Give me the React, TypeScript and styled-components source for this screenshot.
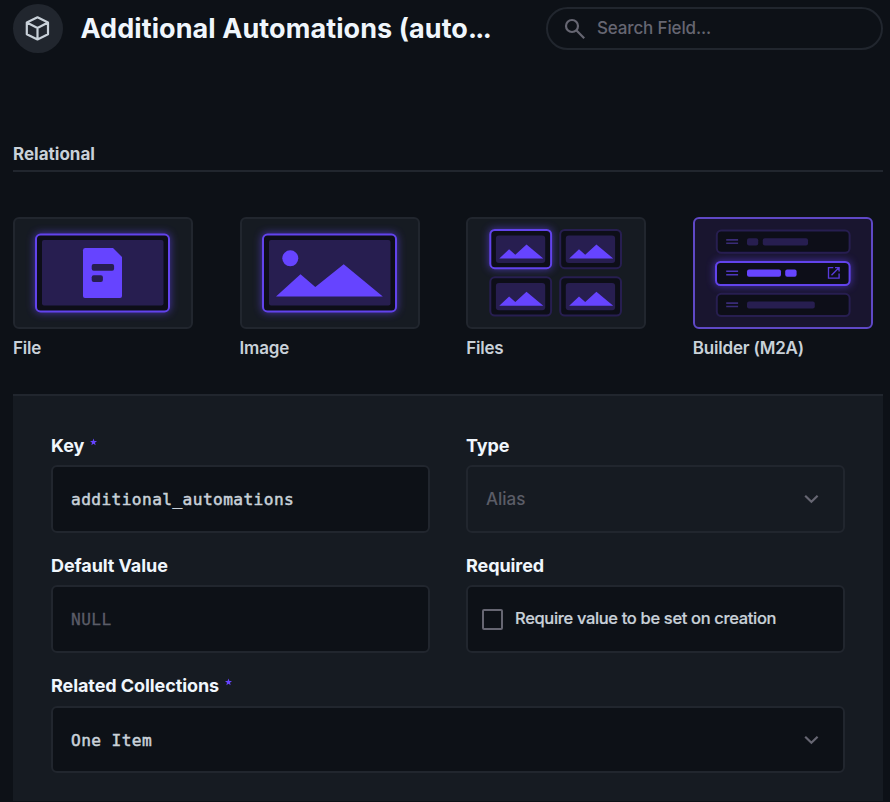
import React from "react";
import styled, { createGlobalStyle, css } from "styled-components";

const GlobalStyle = createGlobalStyle`
  * { box-sizing: border-box; }
  body {
    margin: 0;
    background: #0d1117;
    color: #c9d1d9;
    font-family: Inter, sans-serif;
    overflow: hidden;
  }
`;

const Page = styled.main`
  width: 890px;
  height: 802px;
  padding: 4px 7px 0 13px;
  display: flex;
  flex-direction: column;
  overflow: hidden;
`;

const Header = styled.header`
  height: 49px;
  display: flex;
  align-items: center;
`;

const Avatar = styled.div`
  width: 50px;
  height: 49px;
  flex: none;
  padding-right: 1px;
  border-radius: 50%;
  background: #21262e;
  display: grid;
  place-items: center;
`;

const Title = styled.h1`
  margin: 0 0 0 17.5px;
  width: 465.5px;
  font-size: 27px;
  line-height: 36px;
  font-weight: 700;
  letter-spacing: 0.08px;
  color: #f0f6fc;
  white-space: nowrap;
`;

const Dots = styled.span`
  letter-spacing: -1.7px;
`;

const Search = styled.label`
  width: 337px;
  height: 43px;
  flex: none;
  padding: 0 0 0 16px;
  border: 2px solid #21262e;
  border-radius: 22px;
  display: flex;
  align-items: center;
  gap: 11px;
`;

const SearchInput = styled.input`
  flex: 1;
  min-width: 0;
  padding: 0 0 1px;
  border: 0;
  outline: 0;
  background: transparent;
  color: #c9d1d9;
  font: 500 17px/24px Inter, sans-serif;
  letter-spacing: -0.15px;
  &::placeholder { color: #666672; opacity: 1; }
`;

const SectionTitle = styled.h2`
  margin: 88px 0 0;
  height: 31px;
  padding-top: 1px;
  border-bottom: 2px solid #21262e;
  font-size: 17px;
  line-height: 24px;
  font-weight: 700;
  letter-spacing: 0;
`;

const Cards = styled.div`
  margin-top: 45px;
  display: grid;
  grid-template-columns: repeat(4, 180px);
  column-gap: 46.6px;
`;

const Card = styled.div`
  display: flex;
  flex-direction: column;
`;

const Preview = styled.div<{ $active?: boolean }>`
  height: 112px;
  border: 2px solid ${(p) => (p.$active ? "#5f48c6" : "#21262e")};
  border-radius: 6px;
  background: ${(p) => (p.$active ? "#19152f" : "#161b22")};
  svg { display: block; }
`;

const CardName = styled.div`
  margin-top: 7px;
  font-size: 17px;
  line-height: 24px;
  font-weight: 600;
  letter-spacing: -0.2px;
  white-space: nowrap;
`;

const Panel = styled.section`
  margin-top: 34px;
  height: 407px;
  padding: 38px 38px 0;
  border-top: 2px solid #21262e;
  background: #161b22;
  display: grid;
  grid-template-columns: 379px 379px;
  grid-auto-rows: 120px;
  column-gap: 36px;
`;

const Field = styled.div<{ $wide?: boolean }>`
  display: flex;
  flex-direction: column;
  ${(p) => p.$wide && css`grid-column: 1 / -1;`}
`;

const Label = styled.div<{ $height?: number }>`
  height: ${(p) => p.$height ?? 31}px;
  font-size: 18px;
  line-height: 23px;
  font-weight: 700;
  letter-spacing: -0.08px;
  color: #f0f6fc;
  display: flex;
  gap: 5.5px;
  svg { margin-top: 4px; }
`;

const Control = styled.div<{ $disabled?: boolean; $height?: number; $check?: boolean }>`
  height: ${(p) => p.$height ?? 68}px;
  padding: 0 ${(p) => (p.$check ? "14px" : "24px 0 18px")};
  border: 2px solid #21262e;
  border-radius: 6px;
  background: ${(p) => (p.$disabled ? "#161b22" : "#0d1117")};
  display: flex;
  align-items: center;
  justify-content: ${(p) => (p.$check ? "flex-start" : "space-between")};
`;

const Value = styled.span<{ $muted?: boolean }>`
  font-size: 17px;
  line-height: 24px;
  font-weight: 500;
  color: ${(p) => (p.$muted ? "#5b5d67" : "#c9d1d9")};
`;

const MonoValue = styled(Value)`
  padding-top: 2px;
  font-family: "DejaVu Sans Mono", monospace;
  font-size: 16.2px;
  letter-spacing: 0.4px;
  -webkit-text-stroke: ${(p) => (p.$muted ? "0.3px" : "0.5px")} currentColor;
`;

const CheckBox = styled.span`
  width: 21px;
  height: 21px;
  margin-right: 12px;
  border: 2px solid #666672;
  border-radius: 2px;
`;

const CheckText = styled.span`
  padding-bottom: 2px;
  font-size: 16.5px;
  line-height: 24px;
  font-weight: 500;
  letter-spacing: -0.34px;
  -webkit-text-stroke: 0.2px currentColor;
`;

const ACCENT = "#6644ff";
const DIM = "#271e50";
const GROUND = "#0d0e18";

const Star = () => (
  <svg width="7" height="8" viewBox="0 0 10 10">
    <path fill={ACCENT} d="M5 0 6.3 3.4 10 3.6 7.1 5.9 8.1 9.6 5 7.5 1.9 9.6 2.9 5.9 0 3.6 3.7 3.4z" />
  </svg>
);

const Chevron = () => (
  <svg width="16" height="16" viewBox="0 0 16 16" fill="none" stroke="#666672" strokeWidth="2.2">
    <path d="M2.2 4.8 8.4 10.8 14.6 4.8" />
  </svg>
);

const BoxIcon = () => (
  <svg width="25" height="25" viewBox="0.5 0.5 25 25" fill="none" stroke="#c9d1d9" strokeWidth="2.2" strokeLinejoin="round">
    <path d="M13 1.8 23.5 7.1V18.7L13 24 2.3 18.7V7.1zM2.3 7.1 13 12.4 23.5 7.1M13 12.4V24" />
  </svg>
);

const SearchIcon = () => (
  <svg width="22" height="22" viewBox="0 0 22 22" fill="none" stroke="#666672" strokeWidth="2.2">
    <circle cx="8" cy="8" r="6" />
    <path d="M12.3 12.3 20.2 20.2" />
  </svg>
);

type FrameProps = { x: number; y: number; w: number; h: number; r?: number; glow?: boolean };

const Frame = ({ x, y, w, h, r = 4.5, glow }: FrameProps) => (
  <>
    {glow && <rect x={x} y={y} width={w} height={h} rx={r} fill={ACCENT} opacity="0.6" filter="url(#glow)" />}
    <rect
      x={x + 1} y={y + 1} width={w - 2} height={h - 2} rx={r}
      fill={GROUND} stroke={glow ? "#6243ec" : DIM} strokeWidth="2"
    />
  </>
);

const Art = ({ children }: { children: React.ReactNode }) => (
  <svg width="176" height="108" viewBox="0 0 176 108">
    <defs>
      <filter id="glow" x="-30%" y="-50%" width="160%" height="200%">
        <feGaussianBlur stdDeviation="4" />
      </filter>
    </defs>
    {children}
  </svg>
);

const FileArt = () => (
  <Art>
    <Frame x={20} y={14.6} w={135} h={78.8} glow />
    <rect x="27" y="21" width="121.5" height="65.5" rx="2" fill={DIM} />
    <path fill={ACCENT} d="M70.3 29H98L107 38V77a2 2 0 0 1-2 2H70a2 2 0 0 1-2-2V31.3a2.3 2.3 0 0 1 2.3-2.3z" />
    <rect x="76.7" y="45" width="22.4" height="6.7" rx="2" fill={DIM} />
    <rect x="76.7" y="56.2" width="11.2" height="6.7" rx="2" fill={DIM} />
  </Art>
);

const ImageArt = () => (
  <Art>
    <Frame x={20} y={14.6} w={135} h={78.8} glow />
    <rect x="27" y="21" width="121.5" height="65.5" rx="2" fill={DIM} />
    <circle cx="48.3" cy="39.3" r="8" fill={ACCENT} />
    <path fill={ACCENT} d="M34 77.5 58.5 55.2 73.3 68 101.7 45.2 140.8 77.5z" />
  </Art>
);

const TILES = [
  { x: 21.3, y: 10, glow: true },
  { x: 91.2, y: 10, glow: false },
  { x: 21.3, y: 57.3, glow: false },
  { x: 91.2, y: 57.3, glow: false },
];

const FilesArt = () => (
  <Art>
    {TILES.map((t) => (
      <g key={`${t.x}-${t.y}`}>
        <Frame x={t.x} y={t.y} w={62.8} h={40.2} glow={t.glow} />
        <rect x={t.x + 6.6} y={t.y + 6.6} width="49.3" height="27.3" rx="3" fill={DIM} />
        <path transform={`translate(${t.x} ${t.y})`} fill={ACCENT} d="M10 29.5 19.8 20.3 26 25.8 37.2 15.4 54 29.5z" />
      </g>
    ))}
  </Art>
);

const ROWS = [
  { y: 10.6, glow: false, bars: [[52, 11.2], [67.8, 45.2]] },
  { y: 42, glow: true, bars: [[52, 34], [90.2, 11.4]] },
  { y: 73.8, glow: false, bars: [[52, 67.8]] },
];

const BuilderArt = () => (
  <Art>
    {ROWS.map((row) => (
      <g key={row.y}>
        <Frame x={row.glow ? 20 : 20.8} y={row.y} w={row.glow ? 135.6 : 134.8} h={row.glow ? 25 : 24.2} glow={row.glow} />
        <path
          d={`M31.2 ${row.y + 10.3}H43.1M31.2 ${row.y + 13.7}H43.1`}
          stroke={row.glow ? "#4f37c0" : "#3a2c78"} strokeWidth="1.6"
        />
        {row.bars.map(([x, w]) => (
          <rect key={x} x={x} y={row.y + 8.6} width={w} height="7.2" rx="2" fill={row.glow ? ACCENT : DIM} />
        ))}
        {row.glow && (
          <path
            d="M138.3 48.6H133.5V59.1H144.1V54.4M140 48.6H144.1V52.6M144.1 48.6 136.5 56.2"
            fill="none" stroke="#583bdc" strokeWidth="1.35"
          />
        )}
      </g>
    ))}
  </Art>
);

const INTERFACES = [
  { name: "File", Picture: FileArt },
  { name: "Image", Picture: ImageArt },
  { name: "Files", Picture: FilesArt },
  { name: "Builder (M2A)", Picture: BuilderArt, active: true },
];

export default function App() {
  return (
    <>
      <GlobalStyle />
      <Page>
        <Header>
          <Avatar><BoxIcon /></Avatar>
          <Title>Additional Automations (auto<Dots>...</Dots></Title>
          <Search>
            <SearchIcon />
            <SearchInput placeholder="Search Field..." />
          </Search>
        </Header>
        <SectionTitle>Relational</SectionTitle>
        <Cards>
          {INTERFACES.map(({ name, Picture, active }) => (
            <Card key={name}>
              <Preview $active={active}><Picture /></Preview>
              <CardName>{name}</CardName>
            </Card>
          ))}
        </Cards>
        <Panel>
          <Field>
            <Label>Key <Star /></Label>
            <Control><MonoValue>additional_automations</MonoValue></Control>
          </Field>
          <Field>
            <Label>Type</Label>
            <Control $disabled><Value $muted>Alias</Value><Chevron /></Control>
          </Field>
          <Field>
            <Label>Default Value</Label>
            <Control><MonoValue $muted>NULL</MonoValue></Control>
          </Field>
          <Field>
            <Label>Required</Label>
            <Control $check>
              <CheckBox />
              <CheckText>Require value to be set on creation</CheckText>
            </Control>
          </Field>
          <Field $wide>
            <Label $height={32}>Related Collections <Star /></Label>
            <Control $height={67}><MonoValue>One Item</MonoValue><Chevron /></Control>
          </Field>
        </Panel>
      </Page>
    </>
  );
}
